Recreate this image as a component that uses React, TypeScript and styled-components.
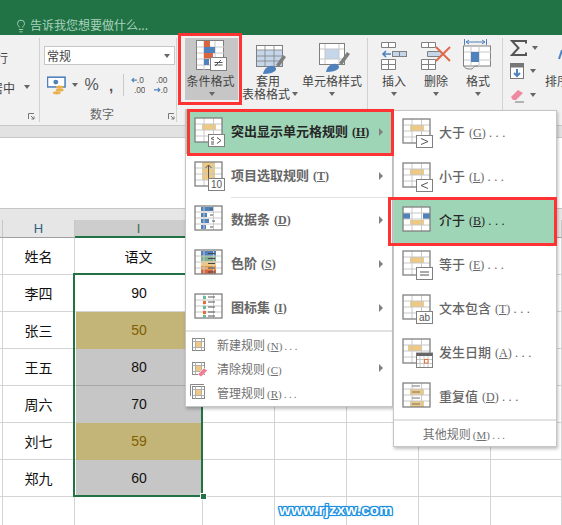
import React from "react";
import styled, { createGlobalStyle } from "styled-components";
import { Lightbulb } from "lucide-react";

const Global = createGlobalStyle`
  html, body { margin: 0; padding: 0; background: #fff; }
  body { font-family: "Noto Sans CJK SC", "Liberation Sans", sans-serif; }
`;

const Page = styled.div`
  position: relative;
  width: 562px;
  height: 525px;
  overflow: hidden;
  background: #fff;
`;
const TitleBar = styled.div`
  height: 35px;
  background: #217346;
  display: flex;
  align-items: flex-end;
  padding: 0 0 2px 14px;
  box-sizing: border-box;
  gap: 2px;
  color: #a9d2bb;
  font-size: 12px;
  line-height: 16px;
`;
const Ribbon = styled.div`
  height: 91px;
  background: #f1f1f1;
  display: flex;
  align-items: flex-start;
  box-sizing: border-box;
  border-bottom: 1px solid #c8c8c8;
`;
const Group = styled.div<{ $w: number }>`
  position: relative;
  width: ${(p) => p.$w}px;
  flex: none;
  height: 84px;
  margin-top: 3px;
  box-sizing: border-box;
  border-right: 1px solid #d2d2d2;
  display: flex;
  overflow: hidden;
`;
const LeftGroup = styled(Group)`
  flex-direction: column;
  color: #444;
  font-size: 12px;
`;
const ClipLine = styled.div<{ $top: number; $pr: number }>`
  display: flex;
  justify-content: flex-end;
  align-items: center;
  height: 16px;
  margin-top: ${(p) => p.$top}px;
  padding-right: ${(p) => p.$pr}px;
  white-space: nowrap;
`;
const Caret = styled.span<{ $ml?: number }>`
  display: block;
  flex: none;
  width: 0;
  height: 0;
  margin-left: ${(p) => p.$ml ?? 0}px;
  border-left: 3.5px solid transparent;
  border-right: 3.5px solid transparent;
  border-top: 4px solid #666;
`;
const Launcher = styled.svg<{ $r: number }>`
  position: absolute;
  right: ${(p) => p.$r}px;
  bottom: 2px;
  width: 7px;
  height: 7px;
`;
const NumberGroup = styled(Group)`
  flex-direction: column;
  padding-left: 4px;
`;
const FormatSelect = styled.div`
  width: 131px;
  height: 23px;
  margin-top: 8px;
  box-sizing: border-box;
  background: #fff;
  border: 1px solid #c6c6c6;
  display: flex;
  align-items: center;
  justify-content: space-between;
  padding: 0 4px 0 2px;
  font-size: 12px;
  color: #444;
`;
const NumberTools = styled.div`
  display: flex;
  align-items: center;
  height: 24px;
  margin-top: 9px;
  padding-left: 3px;
  color: #555;
`;
const Percent = styled.span`
  font: 16px/1 "Liberation Sans", sans-serif;
  margin-left: 7px;
  width: 21px;
`;
const Comma = styled.span`
  font: bold 15px/1 "Liberation Sans", sans-serif;
  margin-left: 4px;
  width: 14px;
`;
const ToolRule = styled.span`
  width: 1px;
  height: 22px;
  background: #c8c8c8;
  margin-right: 7px;
`;
const GroupLabel = styled.div`
  text-align: center;
  font-size: 12px;
  line-height: 16px;
  color: #666;
  margin-top: 10px;
  padding-right: 16px;
`;
const StyleGroup = styled(Group)`
  padding-left: 8px;
`;
const CellGroup = styled(Group)`
  padding-left: 5px;
`;
const BigButton = styled.div<{ $w: number; $on?: boolean }>`
  width: ${(p) => p.$w}px;
  height: 62px;
  flex: none;
  display: flex;
  flex-direction: column;
  align-items: center;
  background: ${(p) => (p.$on ? "#c6c6c6" : "transparent")};
  color: #444;
  font-size: 12px;
  line-height: 13px;
  white-space: nowrap;
`;
const IconSlot = styled.div`
  height: 36px;
  flex: none;
  display: flex;
  align-items: center;
  justify-content: center;
`;
const ButtonLine = styled.div<{ $pl?: number; $pr?: number }>`
  display: flex;
  align-items: center;
  height: 13px;
  flex: none;
  padding-left: ${(p) => p.$pl ?? 0}px;
  padding-right: ${(p) => p.$pr ?? 0}px;
`;
const CaretLine = styled.div`
  height: 13px;
  flex: none;
  display: flex;
  align-items: center;
`;
const EditGroup = styled.div`
  display: flex;
  flex: none;
  height: 84px;
  margin-top: 1px;
  padding-left: 7px;
`;
const EditColumn = styled.div`
  display: flex;
  flex-direction: column;
  width: 35px;
`;
const EditRow = styled.div`
  height: 23.5px;
  display: flex;
  align-items: center;
  gap: 5px;
`;
const SortColumn = styled.div`
  width: 17px;
  display: flex;
  flex-direction: column;
  align-items: flex-start;
  padding-top: 13px;
  font-size: 12px;
  line-height: 16px;
  color: #444;
  white-space: nowrap;
  gap: 12px;
`;
const RibbonEdge = styled.div`
  height: 11px;
  background: #e2e2e2;
`;
const FormulaArea = styled.div`
  height: 71px;
  background: #fff;
  border-top: 1px solid #c8c8c8;
  box-sizing: border-box;
`;
const TopBand = styled.div`
  height: 12px;
  background: #e6e6e6;
  border-top: 1px solid #c6c6c6;
  box-sizing: border-box;
`;
const COLS = "3px 72px 128px 72px 72px 72px 72px 71px";
const Row = styled.div`
  display: grid;
  grid-template-columns: ${COLS};
`;
const HeadCell = styled.div<{ $active?: boolean }>`
  height: 18px;
  box-sizing: border-box;
  background: ${(p) => (p.$active ? "#cdcdcd" : "#e6e6e6")};
  border-right: 1px solid ${(p) => (p.$active ? "#cdcdcd" : "#c6c6c6")};
  border-bottom: ${(p) => (p.$active ? "2px solid #217346" : "1px solid #a0a0a0")};
  font: 13px/17px "Liberation Sans", sans-serif;
  text-align: center;
  color: ${(p) => (p.$active ? "#3f6a4e" : "#2f5f80")};
`;
const SheetBody = styled.div`
  position: relative;
`;
const Cell = styled.div<{ $fill?: string; $ink?: string; $deep?: boolean }>`
  height: 37px;
  box-sizing: border-box;
  border-right: 1px solid #d4d4d4;
  border-bottom: 1px solid ${(p) => (p.$deep ? "#a8a8a8" : p.$fill ? p.$fill : "#d4d4d4")};
  display: flex;
  align-items: center;
  justify-content: center;
  font-size: 14px;
  color: #111;
`;
const DataCell = styled(Cell)`
  border-left: 1px solid #fff;
  background: ${(p) => p.$fill ?? "#fff"};
  color: ${(p) => p.$ink ?? "#111"};
  font: 14px "Liberation Sans", sans-serif;
`;
const Selection = styled.div`
  position: absolute;
  left: 73px;
  top: 35px;
  width: 130px;
  height: 224px;
  box-sizing: border-box;
  border: 2px solid #217346;
`;
const Handle = styled.div`
  position: absolute;
  left: 200px;
  top: 255px;
  width: 7px;
  height: 7px;
  box-sizing: border-box;
  background: #217346;
  border: 1px solid #fff;
`;
const Menu = styled.div`
  position: absolute;
  box-sizing: border-box;
  background: #fff;
  border: 1px solid #c6c6c6;
  box-shadow: 1px 2px 3px rgba(0, 0, 0, 0.25);
  color: #666;
`;
const MainMenu = styled(Menu)`
  left: 185px;
  top: 109px;
  width: 208px;
  height: 298px;
`;
const SubMenu = styled(Menu)`
  left: 393px;
  top: 110px;
  width: 164px;
  height: 337px;
`;
const Item = styled.div<{ $on?: boolean; $pl: number; $bold?: boolean }>`
  height: 44px;
  display: flex;
  align-items: center;
  padding: 0 9px 0 ${(p) => p.$pl}px;
  background: ${(p) => (p.$on ? "#9fd5b7" : "transparent")};
  color: ${(p) => (p.$on ? "#262626" : "#666")};
  font-size: 13px;
  font-weight: ${(p) => (p.$bold ? 700 : 500)};
  white-space: nowrap;
`;
const GlyphBox = styled.div<{ $w: number }>`
  width: ${(p) => p.$w}px;
  flex: none;
  display: flex;
  align-items: center;
  padding-bottom: 2px;
`;
const SmallGlyph = styled.div`
  width: 28px;
  height: 20px;
  flex: none;
  display: flex;
  align-items: center;
`;
const LabelText = styled.span`
  padding-bottom: 3px;
`;
const Arrow = styled.span`
  margin-left: auto;
  width: 0;
  height: 0;
  border-top: 4px solid transparent;
  border-bottom: 4px solid transparent;
  border-left: 4px solid #808080;
`;
const Key = styled.span`
  font-family: "Liberation Serif", serif;
  font-size: 12px;
  margin-left: 4px;
`;
const Dots = styled.span`
  font-family: "Liberation Sans", sans-serif;
  letter-spacing: 3px;
  margin-left: 3px;
  font-weight: 400;
`;
const SmallLabel = styled.span`
  ${Key} { margin-left: 2px; font-size: 11px; }
  ${Dots} { letter-spacing: 2px; margin-left: 2px; font-size: 11px; }
`;
const Divider = styled.div`
  height: 2px;
  background: #e2e2e2;
`;
const MidDivider = styled.div`
  height: 0;
  position: relative;
  &::after {
    content: "";
    position: absolute;
    left: 45px;
    right: 0;
    top: -1px;
    height: 1px;
    background: #e2e2e2;
  }
`;
const SmallItem = styled.div`
  height: 24px;
  display: flex;
  align-items: center;
  padding: 0 9px 0 3px;
  font-size: 12px;
  color: #707070;
  white-space: nowrap;
`;
const MoreItem = styled(SmallItem)`
  justify-content: center;
  padding: 0 20px 0 0;
`;
const RedBox = styled.div<{ $x: number; $y: number; $w: number; $h: number }>`
  position: absolute;
  left: ${(p) => p.$x}px;
  top: ${(p) => p.$y}px;
  width: ${(p) => p.$w}px;
  height: ${(p) => p.$h}px;
  box-sizing: border-box;
  border: 3px solid #ff3333;
`;
const Watermark = styled.div`
  position: absolute;
  left: 279px;
  top: 501px;
  font: bold 15px/18px "Liberation Sans", sans-serif;
  letter-spacing: 0.25px;
  color: #fff;
  text-shadow: -1px 0 #1a8fe0, 1px 0 #1a8fe0, 0 -1px #1a8fe0, 0 1px #1a8fe0,
    -1px -1px #1a8fe0, 1px 1px #1a8fe0, -1px 1px #1a8fe0, 1px -1px #1a8fe0, 0 0 3px #1a8fe0;
`;

const GRID = "#808080";
const THIN = "#c8c8c8";
const GOLD = "#efc97f";
const BLUE = "#4f81bd";
const ORG = "#e2703a";

const Table: React.FC<{ children?: React.ReactNode; under?: React.ReactNode }> = ({ children, under }) => (
  <svg width="32" height="32" viewBox="0 0 32 32">
    <rect x="1" y="3" width="27" height="24" fill="#fff" />
    {under}
    <path d="M10 3v24M19.5 3v24M1 9h27M1 15h27M1 21h27" stroke={THIN} fill="none" />
    <rect x="1" y="3" width="27" height="24" fill="none" stroke={GRID} strokeWidth="1.3" />
    {children}
  </svg>
);
const Badge: React.FC<{ children?: React.ReactNode }> = ({ children }) => (
  <g>
    <rect x="14.5" y="19.5" width="16" height="12" fill="#fff" stroke={GRID} />
    {children}
  </g>
);
const Mark = styled.text`
  font: 10px "Liberation Sans", sans-serif;
  fill: #555;
`;
const goldRow = <rect x="8" y="9" width="14" height="6" fill={GOLD} />;
const HighlightIcon = () => (
  <Table under={goldRow}>
    <Badge>
      <path d="M20 22l-3 1.5 3 1.5M17 27h3M17 29h3M23 22.5l4 3-4 3" stroke="#555" fill="none" />
    </Badge>
  </Table>
);
const TopIcon = () => (
  <Table under={<rect x="8" y="3" width="13" height="18" fill={GOLD} />}>
    <path d="M14.5 19V6M11.5 9l3-3 3 3" stroke="#555" fill="none" />
    <Badge>
      <Mark x="17" y="29">10</Mark>
    </Badge>
  </Table>
);
const BarsIcon = () => (
  <Table
    under={
      <g fill={BLUE}>
        <rect x="7" y="4" width="12" height="4" />
        <rect x="7" y="10" width="6" height="4" />
        <rect x="7" y="16" width="8" height="4" />
        <rect x="7" y="22" width="5" height="4" />
      </g>
    }
  >
    <path d="M16 6h3M16 12h3M18 18h3M16 24h3" stroke="#555" />
  </Table>
);
const ScaleIcon = () => (
  <Table
    under={
      <g>
        <rect x="7" y="4" width="15" height="5" fill={BLUE} />
        <rect x="7" y="9" width="15" height="5" fill="#7fb08f" />
        <rect x="7" y="14" width="15" height="5" fill={GOLD} />
        <rect x="7" y="19" width="15" height="4" fill="#e8944a" />
        <rect x="7" y="23" width="15" height="4" fill="#d9643f" />
      </g>
    }
  >
    <path d="M14 6.5h7M14 11.5h7M14 16.5h7M14 21h7M14 25h7" stroke="#444" />
  </Table>
);
const IconSetIcon = () => (
  <Table>
    <g>
      <rect x="9" y="5" width="3" height="3" fill="#6db897" />
      <rect x="9" y="10" width="3" height="3" fill={ORG} />
      <rect x="9" y="15" width="3" height="3" fill="#6db897" />
      <rect x="9" y="20" width="3" height="3" fill={ORG} />
      <rect x="9" y="24" width="3" height="2.5" fill="#6db897" />
    </g>
    <path d="M14 6h7M14 11h7M14 16h7M14 21h7M14 25h7" stroke="#555" />
  </Table>
);
const GreaterIcon = () => (
  <Table under={goldRow}>
    <Badge><path d="M19 22.5l7 3-7 3" stroke="#555" fill="none" /></Badge>
  </Table>
);
const LessIcon = () => (
  <Table under={goldRow}>
    <Badge><path d="M26 22.5l-7 3 7 3" stroke="#555" fill="none" /></Badge>
  </Table>
);
const BetweenIcon = () => (
  <Table
    under={
      <g>
        <rect x="1" y="9" width="7" height="6" fill={BLUE} />
        <rect x="21" y="9" width="7" height="6" fill={BLUE} />
        <rect x="8" y="16" width="14" height="5" fill={GOLD} />
      </g>
    }
  />
);
const EqualIcon = () => (
  <Table under={goldRow}>
    <Badge><path d="M18 24h9M18 27h9" stroke="#555" /></Badge>
  </Table>
);
const TextIcon = () => (
  <Table under={goldRow}>
    <Badge><Mark x="17" y="29">ab</Mark></Badge>
  </Table>
);
const DateIcon = () => (
  <Table under={<rect x="6" y="9" width="14" height="6" fill={GOLD} />}>
    <rect x="14.5" y="17" width="16" height="14.5" fill="#fff" stroke={GRID} />
    <rect x="14.5" y="17" width="16" height="3" fill="#666" />
    <path d="M18 20v11M22 20v11M26 20v11M15 23.5h15M15 27.5h15" stroke={THIN} />
    <rect x="22.5" y="23.5" width="3.5" height="3.5" fill="#fff" stroke={ORG} />
  </Table>
);
const DupIcon = () => (
  <Table
    under={
      <g fill={GOLD}>
        <rect x="8" y="9" width="14" height="6" />
        <rect x="8" y="21" width="14" height="6" />
      </g>
    }
  >
    <path d="M10 6h8M10 12h8M10 18h8M10 24h8" stroke="#777" />
  </Table>
);
const SmallTable: React.FC<{ children?: React.ReactNode }> = ({ children }) => (
  <svg width="20" height="20" viewBox="0 0 20 20">
    <rect x="3.5" y="4.5" width="12" height="12" fill="#fff" stroke="#888" />
    <path d="M6.5 4.5v12M12.5 4.5v12M3.5 7.5h12M3.5 13.5h12" stroke="#b0b0b0" />
    <rect x="7" y="8" width="5" height="5" fill={GOLD} />
    {children}
  </svg>
);
const Pink = () => <path d="M9 16l6-6 3.5 2.5-6 6H11z" fill="#ee7f97" stroke="#fff" strokeWidth="0.6" />;
const Frame = () => <path d="M1.5 14V2.5H15" stroke="#888" fill="none" />;

const CondIcon = () => (
  <svg width="32" height="32" viewBox="0 0 32 32">
    <rect x="0.5" y="0.5" width="27" height="29" fill="#fff" stroke={GRID} />
    <path d="M8 1v29M19 1v29M1 7h27M1 13h27M1 19h27M1 25h27" stroke={THIN} />
    <rect x="8" y="1" width="6" height="6" fill="#d9643f" />
    <rect x="8" y="7" width="11" height="6" fill={BLUE} />
    <rect x="8" y="13" width="9" height="5.5" fill="#d9643f" />
    <rect x="8" y="19" width="5" height="6" fill={BLUE} />
    <rect x="14.5" y="17.5" width="16" height="13" fill="#fff" stroke={GRID} />
    <path d="M19 26l6-6M18.5 22.5h8M18.5 25h8" stroke="#555" fill="none" />
  </svg>
);
const TableStyleIcon = () => (
  <svg width="36" height="36" viewBox="0 0 36 36">
    <rect x="6.5" y="7.5" width="26" height="21" fill="#c5d6ea" stroke={GRID} />
    <rect x="7" y="8" width="25" height="4" fill="#fff" />
    <path d="M15 8v20M24 8v20M7 12h25M7 18h25M7 23h25" stroke={GRID} strokeWidth="0.8" />
    <path d="M26 27l7-10 3 2-7 10z" fill="#7f7f7f" />
    <path d="M13 36c1-5 5-9 10-8 3 1 4 3 2 5-2 2-6 3-12 3z" fill={BLUE} />
  </svg>
);
const CellStyleIcon = () => (
  <svg width="36" height="36" viewBox="0 0 36 36">
    <rect x="5.5" y="5.5" width="25" height="21" fill="#fff" stroke={GRID} />
    <rect x="11" y="11" width="14" height="10" fill="#c5d6ea" />
    <path d="M11 6v20M25 6v20M6 11h24M6 21h24" stroke={THIN} />
    <path d="M25 25l8-11 3 2-8 11z" fill="#7f7f7f" />
    <path d="M12 34c1-5 5-9 10-8 3 1 4 3 2 5-2 2-6 3-12 3z" fill={BLUE} />
  </svg>
);
const InsertIcon = () => (
  <svg width="28" height="30" viewBox="0 0 28 30">
    <path d="M1.5 1.5h14v5h-14zM8.5 1.5v5M1.5 18.5h14v10h-14zM8.5 18.5v10M1.5 23.5h14" fill="#fff" stroke={GRID} />
    <rect x="12.5" y="10.5" width="14" height="5" fill="#c5d6ea" stroke={GRID} />
    <path d="M19.5 10.5v5" stroke={GRID} />
    <path d="M11 13H3M6 10l-3 3 3 3" stroke={BLUE} strokeWidth="1.6" fill="none" />
  </svg>
);
const DeleteIcon = () => (
  <svg width="32" height="30" viewBox="0 0 32 30">
    <path d="M1.5 1.5h14v5h-14zM8.5 1.5v5M1.5 18.5h14v10h-14zM8.5 18.5v10M1.5 23.5h14" fill="#fff" stroke={GRID} />
    <path d="M7.5 10.5h12l4 2.5-4 2.5h-12z" fill="#c5d6ea" stroke={GRID} />
    <path d="M16 6l14 14M30 6L16 20" stroke="#e0694a" strokeWidth="2" />
  </svg>
);
const FormatIcon = () => (
  <svg width="30" height="34" viewBox="0 0 30 34">
    <path d="M1.5 0v6M23.5 0v6M3 3h19M6 1l-3 2 3 2M19 1l3 2-3 2" stroke={BLUE} fill="none" />
    <rect x="0.5" y="7" width="27" height="20" fill="#fff" stroke={GRID} />
    <path d="M8 7v20M16 7v20M1 13h27M1 21h27" stroke={THIN} />
    <rect x="8" y="13" width="8" height="10" fill={BLUE} />
    <path d="M1 27c1 3 4 3 8 3 2-3 4-3 6-3" stroke={GRID} fill="none" />
  </svg>
);
const CurrencyIcon = () => (
  <svg width="21" height="20" viewBox="0 0 21 20">
    <rect x="0.5" y="2" width="18" height="10" fill="#fff" stroke={BLUE} strokeWidth="1.6" />
    <circle cx="9" cy="7" r="2.5" fill={BLUE} />
    <ellipse cx="13" cy="12" rx="4" ry="1.6" fill="#eab04d" />
    <ellipse cx="13" cy="15" rx="4" ry="1.6" fill="#eab04d" />
    <ellipse cx="10" cy="18" rx="4" ry="1.6" fill="#eab04d" />
  </svg>
);
const DecimalGlyph = styled.svg`
  margin-right: 8px;
`;
const DecText = styled.text`
  font: 8.5px "Liberation Sans", sans-serif;
  fill: #555;
`;
const IncDecimal = () => (
  <DecimalGlyph width="15" height="20" viewBox="0 0 15 20">
    <DecText x="6" y="8">.0</DecText>
    <DecText x="3" y="18">.00</DecText>
    <path d="M6 5H1M3 3L1 5l2 2" stroke={BLUE} fill="none" strokeWidth="1.2" />
  </DecimalGlyph>
);
const DecDecimal = () => (
  <DecimalGlyph width="15" height="20" viewBox="0 0 15 20">
    <DecText x="3" y="8">.00</DecText>
    <DecText x="8" y="18">.0</DecText>
    <path d="M1 15h6M5 13l2 2-2 2" stroke={BLUE} fill="none" strokeWidth="1.2" />
  </DecimalGlyph>
);
const SumIcon = () => (
  <svg width="17" height="16" viewBox="0 0 17 16">
    <path d="M16 3.5V1H2l6.5 7L2 15h14v-2.5" stroke="#555" strokeWidth="2" fill="none" />
  </svg>
);
const FillIcon = () => (
  <svg width="15" height="16" viewBox="0 0 15 16">
    <rect x="0.5" y="0.5" width="13" height="15" fill="#fff" stroke="#777" />
    <rect x="0.5" y="0.5" width="13" height="4" fill="#777" />
    <path d="M7 6v7M4 10l3 3 3-3" stroke={BLUE} strokeWidth="2" fill="none" />
  </svg>
);
const EraserIcon = () => (
  <svg width="15" height="16" viewBox="0 0 15 16">
    <path d="M1 10l7-7 5 3-7 7H3z" fill="#ee8a9f" />
    <path d="M5 15h9" stroke="#777" />
  </svg>
);
const SortFragment = () => (
  <svg width="17" height="12" viewBox="0 0 17 12">
    <path d="M14 10l3-9" stroke={BLUE} strokeWidth="2" fill="none" />
  </svg>
);
const LauncherIcon: React.FC<{ r: number }> = ({ r }) => (
  <Launcher $r={r} viewBox="0 0 7 7">
    <path d="M0.5 6V0.5H6M3 3l3 3M6 3.5V6H3.5" stroke="#777" fill="none" />
  </Launcher>
);

const Label: React.FC<{ text: string; k: string; dots?: boolean }> = ({ text, k, dots }) => (
  <LabelText>
    {text}
    <Key>
      (<u>{k}</u>)
    </Key>
    {dots && <Dots>...</Dots>}
  </LabelText>
);
const Small: React.FC<{ text: string; k: string; dots?: boolean }> = ({ text, k, dots }) => (
  <SmallLabel>
    {text}
    <Key>
      (<u>{k}</u>)
    </Key>
    {dots && <Dots>...</Dots>}
  </SmallLabel>
);

const main = [
  { icon: <HighlightIcon />, text: "突出显示单元格规则", k: "H", on: true },
  { icon: <TopIcon />, text: "项目选取规则", k: "T" },
  { icon: <BarsIcon />, text: "数据条", k: "D" },
  { icon: <ScaleIcon />, text: "色阶", k: "S" },
  { icon: <IconSetIcon />, text: "图标集", k: "I" },
];
const sub = [
  { icon: <GreaterIcon />, text: "大于", k: "G" },
  { icon: <LessIcon />, text: "小于", k: "L" },
  { icon: <BetweenIcon />, text: "介于", k: "B", on: true },
  { icon: <EqualIcon />, text: "等于", k: "E" },
  { icon: <TextIcon />, text: "文本包含", k: "T" },
  { icon: <DateIcon />, text: "发生日期", k: "A" },
  { icon: <DupIcon />, text: "重复值", k: "D" },
];
const GOLDCELL = "#c3b478";
const GRAYCELL = "#c6c6c6";
const rows: { name: string; score: string; fill?: string; ink?: string; deep?: boolean }[] = [
  { name: "李四", score: "90" },
  { name: "张三", score: "50", fill: GOLDCELL, ink: "#7f6000" },
  { name: "王五", score: "80", fill: GRAYCELL, deep: true },
  { name: "周六", score: "70", fill: GRAYCELL },
  { name: "刘七", score: "59", fill: GOLDCELL, ink: "#7f6000" },
  { name: "郑九", score: "60", fill: GRAYCELL },
];
const Blanks = () => (
  <>
    <Cell />
    <Cell />
    <Cell />
    <Cell />
    <Cell />
  </>
);

export default function App() {
  return (
    <Page>
      <Global />
      <TitleBar>
        <Lightbulb size={14} strokeWidth={1.6} />
        <span>告诉我您想要做什么...</span>
      </TitleBar>
      <Ribbon>
        <LeftGroup $w={40}>
          <ClipLine $top={11} $pr={31}>自动换行</ClipLine>
          <ClipLine $top={14} $pr={9}>
            合并后居中
            <Caret $ml={9} />
          </ClipLine>
          <LauncherIcon r={4} />
        </LeftGroup>
        <NumberGroup $w={137}>
          <FormatSelect>
            常规
            <Caret />
          </FormatSelect>
          <NumberTools>
            <CurrencyIcon />
            <Caret $ml={4} />
            <Percent>%</Percent>
            <Comma>,</Comma>
            <ToolRule />
            <IncDecimal />
            <DecDecimal />
          </NumberTools>
          <GroupLabel>数字</GroupLabel>
          <LauncherIcon r={1} />
        </NumberGroup>
        <StyleGroup $w={191}>
          <BigButton $w={53} $on>
            <IconSlot><CondIcon /></IconSlot>
            <ButtonLine $pr={2}>条件格式</ButtonLine>
            <CaretLine><Caret /></CaretLine>
          </BigButton>
          <BigButton $w={60}>
            <IconSlot><TableStyleIcon /></IconSlot>
            <ButtonLine>套用</ButtonLine>
            <ButtonLine $pl={4}>表格格式<Caret $ml={2} /></ButtonLine>
          </BigButton>
          <BigButton $w={68}>
            <IconSlot><CellStyleIcon /></IconSlot>
            <ButtonLine>单元格样式</ButtonLine>
            <CaretLine><Caret /></CaretLine>
          </BigButton>
        </StyleGroup>
        <CellGroup $w={135}>
          <BigButton $w={42}>
            <IconSlot><InsertIcon /></IconSlot>
            <ButtonLine>插入</ButtonLine>
            <CaretLine><Caret /></CaretLine>
          </BigButton>
          <BigButton $w={42}>
            <IconSlot><DeleteIcon /></IconSlot>
            <ButtonLine>删除</ButtonLine>
            <CaretLine><Caret /></CaretLine>
          </BigButton>
          <BigButton $w={42}>
            <IconSlot><FormatIcon /></IconSlot>
            <ButtonLine>格式</ButtonLine>
            <CaretLine><Caret /></CaretLine>
          </BigButton>
        </CellGroup>
        <EditGroup>
          <EditColumn>
            <EditRow><SumIcon /><Caret /></EditRow>
            <EditRow><FillIcon /><Caret /></EditRow>
            <EditRow><EraserIcon /><Caret /></EditRow>
          </EditColumn>
          <SortColumn>
            <SortFragment />
            <span>排序</span>
          </SortColumn>
        </EditGroup>
      </Ribbon>
      <RibbonEdge />
      <FormulaArea />
      <TopBand />
      <Row>
        <HeadCell />
        <HeadCell>H</HeadCell>
        <HeadCell $active>I</HeadCell>
        <HeadCell />
        <HeadCell />
        <HeadCell />
        <HeadCell />
        <HeadCell />
      </Row>
      <SheetBody>
        <Row>
          <Cell />
          <Cell>姓名</Cell>
          <Cell>语文</Cell>
          <Blanks />
        </Row>
        {rows.map((r) => (
          <Row key={r.name}>
            <Cell />
            <Cell>{r.name}</Cell>
            <DataCell $fill={r.fill} $ink={r.ink} $deep={r.deep}>{r.score}</DataCell>
            <Blanks />
          </Row>
        ))}
        <Row>
          <Cell />
          <Cell />
          <Cell />
          <Blanks />
        </Row>
        <Selection />
        <Handle />
      </SheetBody>
      <MainMenu>
        {main.map((m, i) => (
          <React.Fragment key={m.text}>
            <Item $on={m.on} $pl={8} $bold>
              <GlyphBox $w={37}>{m.icon}</GlyphBox>
              <Label text={m.text} k={m.k} />
              <Arrow />
            </Item>
            {i === 1 && <MidDivider />}
          </React.Fragment>
        ))}
        <Divider />
        <SmallItem>
          <SmallGlyph><SmallTable /></SmallGlyph>
          <Small text="新建规则" k="N" dots />
        </SmallItem>
        <SmallItem>
          <SmallGlyph><SmallTable><Pink /></SmallTable></SmallGlyph>
          <Small text="清除规则" k="C" />
          <Arrow />
        </SmallItem>
        <SmallItem>
          <SmallGlyph><SmallTable><Frame /></SmallTable></SmallGlyph>
          <Small text="管理规则" k="R" dots />
        </SmallItem>
      </MainMenu>
      <SubMenu>
        {sub.map((m) => (
          <Item key={m.text} $on={m.on} $pl={8}>
            <GlyphBox $w={37}>{m.icon}</GlyphBox>
            <Label text={m.text} k={m.k} dots />
          </Item>
        ))}
        <Divider />
        <MoreItem>
          <Small text="其他规则" k="M" dots />
        </MoreItem>
      </SubMenu>
      <RedBox $x={178} $y={33} $w={64} $h={72} />
      <RedBox $x={187} $y={109} $w={207} $h={47} />
      <RedBox $x={388} $y={197} $w={169} $h={49} />
      <Watermark>www.rjzxw.com</Watermark>
    </Page>
  );
}
